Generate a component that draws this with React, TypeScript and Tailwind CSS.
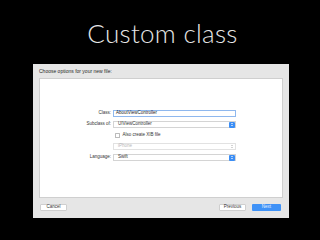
const ui = "font-['Liberation_Sans',Arial,sans-serif]"

function Stepper({ blue = true }: { blue?: boolean }) {
	return (
		<span className={`flex h-[6px] w-[6px] flex-col items-center justify-center rounded-[1px] ${blue ? "bg-[#3b8ef5]" : "bg-transparent"}`}>
			<svg className="h-[5px] w-[4px]" viewBox="0 0 4 5">
				<path d="M1 2 L2 1 L3 2 M1 3 L2 4 L3 3" fill="none" stroke={blue ? "#fff" : "#b5b5b5"} strokeWidth="0.6" />
			</svg>
		</span>
	)
}

function Row({ label, children }: { label?: string, children: React.ReactNode }) {
	return (
		<div className="flex h-[7px] items-center">
			<span className="w-[72px] pr-[2px] text-right text-[4.5px] text-[#333]">{label}</span>
			{children}
		</div>
	)
}

function PopUp({ value, disabled = false }: { value: string, disabled?: boolean }) {
	return (
		<div className={`flex h-[7px] w-[123px] items-center justify-between border-[0.5px] ${disabled ? "border-[#e2e2e2] text-[#b8b8b8]" : "border-[#d4d4d4] text-[#333]"} bg-white pl-[4px] pr-[0.5px] text-[4.5px]`}>
			<span>{value}</span>
			<Stepper blue={!disabled} />
		</div>
	)
}

function Button({ label, primary = false }: { label: string, primary?: boolean }) {
	return (
		<div className={`flex h-[7px] items-center justify-center rounded-[1px] text-[4.5px] ${primary ? "w-[29px] bg-[#3f92f7] text-[#e8f1ff]" : "w-[27px] border-[0.5px] border-[#cfcfcf] bg-white text-[#333]"}`}>
			{label}
		</div>
	)
}

export default function App() {
	return (
		<div className="flex h-[240px] w-[320px] flex-col bg-black">
			<div className="flex h-[64px] justify-center pt-[18px]">
				<span className="pl-[5px] font-['Lato',sans-serif] text-[26px] font-light leading-[30px] tracking-[0.3px] text-[#e6e6e6]">Custom class</span>
			</div>
			<div className={`${ui} ml-[33px] flex h-[154px] w-[256px] flex-col bg-[#e6e6e6] px-[6px] pt-[4px]`}>
				<div className="h-[10px] text-[5px] leading-[6px] text-[#2a2a2a]">Choose options for your new file:</div>
				<div className="flex h-[120px] flex-col border-[0.5px] border-[#cfcfcf] bg-white pt-[31px]">
					<div className="flex flex-col gap-[4px] pl-[1px]">
						<Row label="Class:">
							<div className="flex h-[7px] w-[123px] items-center border-[0.8px] border-[#8fb8ee] bg-white pl-[2px] text-[4.5px] text-[#222]">AboutViewController</div>
						</Row>
						<Row label="Subclass of:">
							<PopUp value="UIViewController" />
						</Row>
						<Row>
							<span className="ml-[2px] mr-[3px] h-[4.5px] w-[4.5px] rounded-[0.5px] border-[0.5px] border-[#bbb] bg-white" />
							<span className="text-[4.5px] text-[#333]">Also create XIB file</span>
						</Row>
						<Row>
							<PopUp value="iPhone" disabled />
						</Row>
						<Row label="Language:">
							<PopUp value="Swift" />
						</Row>
					</div>
				</div>
				<div className="flex items-center justify-between pt-[6px] pr-[2px] pl-[1px]">
					<Button label="Cancel" />
					<div className="flex gap-[6px]">
						<Button label="Previous" />
						<Button label="Next" primary />
					</div>
				</div>
			</div>
		</div>
	)
}
